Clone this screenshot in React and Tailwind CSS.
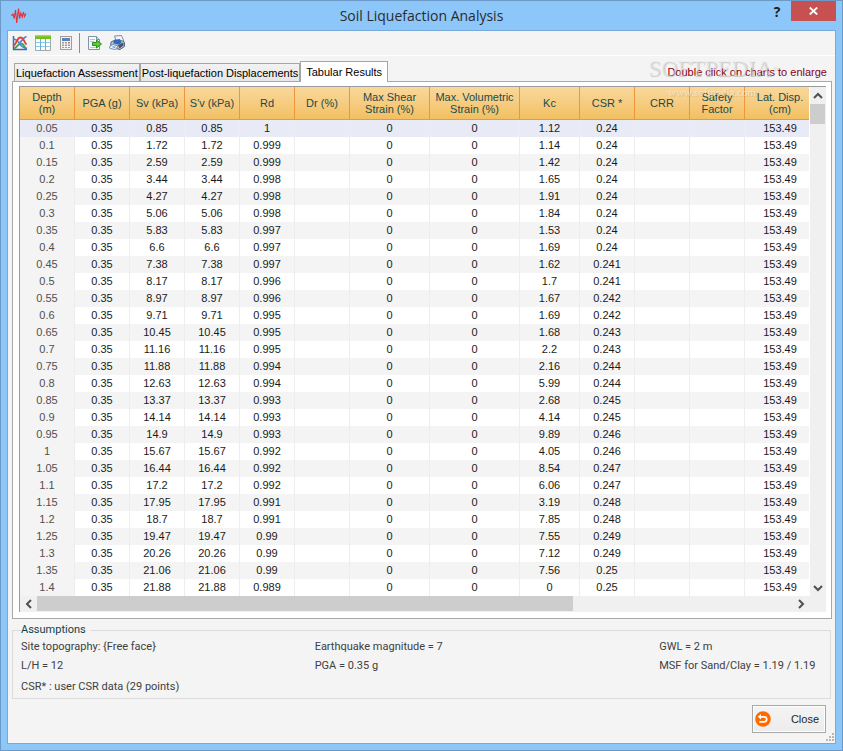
import React, { useState } from 'react';
import clsx from 'clsx';

const COLUMNS = [
  { label: 'Depth (m)', lines: ['Depth', '(m)'], width: 'w-[55px]' },
  { label: 'PGA (g)', width: 'w-[55px]' },
  { label: 'Sv (kPa)', width: 'w-[55px]' },
  { label: "S'v (kPa)", width: 'w-[55px]' },
  { label: 'Rd', width: 'w-[55px]' },
  { label: 'Dr (%)', width: 'w-[55px]' },
  { label: 'Max Shear Strain (%)', width: 'w-[80px]' },
  { label: 'Max. Volumetric Strain (%)', width: 'w-[90px]' },
  { label: 'Kc', width: 'w-[60px]' },
  { label: 'CSR *', width: 'w-[55px]' },
  { label: 'CRR', width: 'w-[55px]' },
  { label: 'Safety Factor', width: 'w-[55px]' },
  { label: 'Lat. Disp. (cm)', width: 'w-[64px]' }
];

// depth, vertical stress, Rd, Kc, CSR
const LAYERS = [
  ['0.05', '0.85', '1', '1.12', '0.24'],
  ['0.1', '1.72', '0.999', '1.14', '0.24'],
  ['0.15', '2.59', '0.999', '1.42', '0.24'],
  ['0.2', '3.44', '0.998', '1.65', '0.24'],
  ['0.25', '4.27', '0.998', '1.91', '0.24'],
  ['0.3', '5.06', '0.998', '1.84', '0.24'],
  ['0.35', '5.83', '0.997', '1.53', '0.24'],
  ['0.4', '6.6', '0.997', '1.69', '0.24'],
  ['0.45', '7.38', '0.997', '1.62', '0.241'],
  ['0.5', '8.17', '0.996', '1.7', '0.241'],
  ['0.55', '8.97', '0.996', '1.67', '0.242'],
  ['0.6', '9.71', '0.995', '1.69', '0.242'],
  ['0.65', '10.45', '0.995', '1.68', '0.243'],
  ['0.7', '11.16', '0.995', '2.2', '0.243'],
  ['0.75', '11.88', '0.994', '2.16', '0.244'],
  ['0.8', '12.63', '0.994', '5.99', '0.244'],
  ['0.85', '13.37', '0.993', '2.68', '0.245'],
  ['0.9', '14.14', '0.993', '4.14', '0.245'],
  ['0.95', '14.9', '0.993', '9.89', '0.246'],
  ['1', '15.67', '0.992', '4.05', '0.246'],
  ['1.05', '16.44', '0.992', '8.54', '0.247'],
  ['1.1', '17.2', '0.992', '6.06', '0.247'],
  ['1.15', '17.95', '0.991', '3.19', '0.248'],
  ['1.2', '18.7', '0.991', '7.85', '0.248'],
  ['1.25', '19.47', '0.99', '7.55', '0.249'],
  ['1.3', '20.26', '0.99', '7.12', '0.249'],
  ['1.35', '21.06', '0.99', '7.56', '0.25'],
  ['1.4', '21.88', '0.989', '0', '0.25']
];

const TABS = ['Liquefaction Assessment', 'Post-liquefaction Displacements', 'Tabular Results'];

const PulseIcon = () => (
  <svg width="16" height="16" viewBox="0 0 16 16" fill="none" stroke="#e5303a" strokeWidth="1.100">
    <path d="M0 7.500l1-.5L2 6l1.200 4.500L4.500 2l1.200 13L7.500.5l1 10L9.800 5l1.400 4L12.500 4l1 4.500 1.500-3" />
  </svg>
);

const ChartIcon = () => (
  <svg width="16" height="16" viewBox="0 0 16 16" fill="none">
    <path d="M1.500 1v13.500H15" stroke="#3a6ea8" strokeWidth="1.500" />
    <path d="M2 13.500C5 13 6 8.500 9 8.500s3 3.500 5 5" stroke="#3fa648" strokeWidth="1.800" />
    <path d="M1 4c3 0 4 1 6 4s4 5 8 5.500" stroke="#4186d8" strokeWidth="1.500" />
    <path d="M7.500 7.500C10 6.500 11 2.500 14.500 1.500" stroke="#4186d8" strokeWidth="1.700" />
    <path d="M2 10.500C5 8 5 2.500 8.500 2.500S12 7.500 14.500 9.500" stroke="#e8403c" strokeWidth="1.900" />
  </svg>
);

const SheetIcon = () => (
  <svg width="16" height="16" viewBox="0 0 16 16" fill="none">
    <path d="M.5 3.500h15v12H.5z" fill="#fff" stroke="#a4a9ac" />
    <path d="M0 .5h16v3.500H0z" fill="#72bf1f" />
    <path d="M0 .5h16v1H0z" fill="#93d44d" />
    <path d="M1 7.500h14M1 11.500h14" stroke="#8ccbe8" />
    <path d="M5.500 4v11.500M10.500 4v11.500" stroke="#62b1dc" />
  </svg>
);

const CalculatorIcon = () => (
  <svg width="16" height="16" viewBox="0 0 16 16">
    <rect x="2.500" y="1.500" width="11" height="13" fill="#f3f2ef" stroke="#a09d98" />
    <rect x="4" y="3" width="8" height="3" fill="#5a82bd" />
    <path d="M4 7h2v1.500H4zM7 7h2v1.500H7zM4 9.500h2V11H4zM7 9.500h2V11H7zM4 12h2v1H4zM7 12h2v1H7zM10 9.500h2V11h-2zM10 12h2v1h-2z" fill="#9a9ca3" />
    <path d="M10 7h2v1.500h-2z" fill="#dd6e55" />
  </svg>
);

const ExportIcon = () => (
  <svg width="16" height="16" viewBox="0 0 16 16">
    <path d="M2.500 1.500h8l3 3v10h-11z" fill="#f7faff" stroke="#7d90ad" />
    <path d="M10.500 1.500v3h3" fill="#c6d5ea" stroke="#7d90ad" />
    <path d="M4 4.500h5M4 6.500h4M4 12.500h7" stroke="#b6c5da" />
    <path d="M6.500 7.500h4V5l5 4-5 4v-2.500h-4z" fill="#5ccc33" stroke="#2b8f18" />
  </svg>
);

const PrinterIcon = () => (
  <svg width="16" height="16" viewBox="0 0 16 16">
    <path d="M5.500 1l7-.5 2.500 6-7 2z" fill="#f2f6fc" stroke="#7f8da5" />
    <path d="M2 7l4-2 8 1 1.500 1.500v4L11 14.500l-9.500-2z" fill="#b8c2d1" stroke="#5b6780" />
    <path d="M4.500 6.500l1-1.500 5.500-1 1.500 4-3 1.500-5-1z" fill="#2c69bb" />
    <path d="M9 10l5.500-2.500v3l-4 3z" fill="#49546a" />
    <path d="M.5 11.500l3.500-2 5 1.500-2.500 3.500-5.500-1z" fill="#fff" stroke="#6f8db8" />
    <path d="M2.500 12l2-1 2.500.7-1.200 1.500z" fill="#7aa3dc" />
  </svg>
);

const BackIcon = () => (
  <svg width="16" height="16" viewBox="0 0 16 16">
    <circle cx="8" cy="8" r="7.800" fill="#ff6a00" />
    <path d="M5 5.800h4.200a2.500 2.500 0 0 1 0 5H4.300" stroke="#fff" strokeWidth="1.700" fill="none" />
    <path d="M2.800 5.800L6 3v5.600z" fill="#fff" />
  </svg>
);

const Chevron = ({ d }) => (
  <svg width="10" height="10" viewBox="0 0 10 10" fill="none" stroke="#505050" strokeWidth="2">
    <path d={d} />
  </svg>
);

const ToolButton = ({ label, children }) => (
  <button type="button" aria-label={label} className="flex h-5 w-[23px] items-center justify-center hover:bg-[#dcebfa]">
    {children}
  </button>
);

const TitleBar = () => (
  <header className="grid h-[29px] grid-cols-[1fr_auto_1fr] px-[6px]">
    <div className="flex items-center pl-1">
      <PulseIcon />
    </div>
    <h1 className="self-center font-['Open_Sans',sans-serif] text-[14px] leading-[20px] text-[#2b2b2b]">
      Soil Liquefaction Analysis
    </h1>
    <div className="flex items-start justify-end">
      <button type="button" aria-label="Help" className="h-[22px] w-7 font-['Open_Sans',sans-serif] text-[14px] leading-[20px] font-bold text-[#1e1e1e]">
        ?
      </button>
      <button type="button" aria-label="Close window" className="flex h-5 w-[45px] items-center justify-center bg-[#c75050]">
        <svg width="9" height="8" viewBox="0 0 9 8" stroke="#fff" strokeWidth="1.800">
          <path d="M.8.5l7.400 7M8.200.5l-7.400 7" />
        </svg>
      </button>
    </div>
  </header>
);

const ResultsTable = () => (
  <table className="w-full table-fixed border-separate border-spacing-0 text-center">
    <colgroup>
      {COLUMNS.map(col => <col key={col.label} className={col.width} />)}
    </colgroup>
    <thead>
      <tr className="h-[33px] bg-linear-to-b from-[#f9d89c] to-[#f2bf5f] text-[#1c4a4a]">
        {COLUMNS.map((col, index) => (
          <th
            key={col.label}
            className={clsx(
              'border-b border-[#f0963a] p-0 leading-[12px] font-normal',
              index < COLUMNS.length - 1 ? 'border-r' : 'pl-[6px]'
            )}
          >
            {col.lines
              ? col.lines.map(line => <span key={line} className="block">{line}</span>)
              : col.label}
          </th>
        ))}
      </tr>
    </thead>
    <tbody className="text-[#1a1a1a]">
      {LAYERS.map(([depth, stress, rd, kc, csr], rowIndex) => {
        const cells = [depth, '0.35', stress, stress, rd, '', '0', '0', kc, csr, '', '', '153.49'];
        return (
          <tr
            key={depth}
            className={clsx(
              'h-[17px]',
              rowIndex === 0 ? 'bg-[#e8eaf5]' : rowIndex % 2 ? 'bg-white' : 'bg-[#f4f4f4]'
            )}
          >
            {cells.map((value, index) => (
              <td
                key={index}
                className={clsx(
                  'p-0 leading-[17px]',
                  index < cells.length - 1 ? 'border-r border-[#ededed]' : 'pl-[6px]',
                  index === 0 && 'text-[#505050]',
                  index === 0 && rowIndex > 0 && 'bg-[#f4f4f4]'
                )}
              >
                {value}
              </td>
            ))}
          </tr>
        );
      })}
    </tbody>
  </table>
);

const Assumptions = () => (
  <fieldset className="mt-1 mr-px border border-[#dcdcdc] pb-[2px] pl-2 font-['Roboto',sans-serif] text-[#404040]">
    <legend className="pr-1 leading-[14px] text-[#12404a]">Assumptions</legend>
    <div className="grid grid-cols-[294fr_345fr_171fr] leading-[19px]">
      <span>Site topography: {'{Free face}'}</span>
      <span>Earthquake magnitude = 7</span>
      <span>GWL = 2 m</span>
      <span>L/H = 12</span>
      <span>PGA = 0.35 g</span>
      <span>MSF for Sand/Clay = 1.19 / 1.19</span>
    </div>
    <p className="mt-[2px] leading-[19px]">CSR* : user CSR data (29 points)</p>
  </fieldset>
);

const SizeGrip = () => (
  <svg width="9" height="9" viewBox="0 0 9 9" fill="#b8b8b8" className="ml-auto">
    <path d="M6 0h2v2H6zM3 3h2v2H3zM6 3h2v2H6zM0 6h2v2H0zM3 6h2v2H3zM6 6h2v2H6z" />
  </svg>
);

const App = () => {
  const [activeTab, setActiveTab] = useState('Tabular Results');

  return (
    <div className="relative flex min-h-screen flex-col border border-[#6b9ac8] bg-[#8dc7fa] font-['Liberation_Sans',Arial,sans-serif] text-[11px]">
      <TitleBar />

      <main className="mx-[6px] mb-[6px] flex-1 border border-[#78aad9] bg-[#f4f4f4]">
        {/* Toolbar */}
        <div className="flex h-[25px] items-center border-b border-white">
          <ToolButton label="Charts"><ChartIcon /></ToolButton>
          <ToolButton label="Table"><SheetIcon /></ToolButton>
          <ToolButton label="Calculator"><CalculatorIcon /></ToolButton>
          <div className="mx-[2px] h-5 w-px bg-[#8c8c8c]" />
          <ToolButton label="Export"><ExportIcon /></ToolButton>
          <ToolButton label="Print"><PrinterIcon /></ToolButton>
        </div>

        <div className="pr-[3px] pl-1">
          {/* Tabs */}
          <div className="flex h-[25px] items-end justify-between">
            <div role="tablist" className="flex items-end pl-[2px]">
              {TABS.map(tab => (
                <button
                  key={tab}
                  type="button"
                  role="tab"
                  aria-selected={tab === activeTab}
                  onClick={() => setActiveTab(tab)}
                  className={clsx(
                    'border border-b-0 border-[#a5a5a5] text-black',
                    tab === activeTab
                      ? 'relative -mb-px h-[21px] bg-white px-[5px]'
                      : 'h-[18px] bg-linear-to-b from-[#f2f2f2] to-[#e6e6e6] px-px pt-px'
                  )}
                >
                  {tab}
                </button>
              ))}
            </div>
            <p className="pr-[5px] leading-[18px] text-[#8b0015]">Double click on charts to enlarge</p>
          </div>

          {/* Results grid */}
          <section className="border border-[#a8a8a8] bg-white pt-1 pr-[5px] pb-[6px] pl-[6px]">
            <div className="border-t border-l border-[#9a9a9a]">
              <div className="flex">
                <div className="min-w-0 flex-1">
                  <ResultsTable />
                </div>
                <div className="ml-px flex w-4 flex-col bg-[#f0f0f0]">
                  <button type="button" aria-label="Scroll up" className="flex h-[17px] items-center justify-center">
                    <Chevron d="M1 7l4-4 4 4" />
                  </button>
                  <div className="flex-1">
                    <div className="mr-px h-5 bg-[#cdcdcd]" />
                  </div>
                  <button type="button" aria-label="Scroll down" className="flex h-[17px] items-center justify-center">
                    <Chevron d="M1 3l4 4 4-4" />
                  </button>
                </div>
              </div>
              <div className="flex h-4 bg-[#f0f0f0] pr-[17px]">
                <button type="button" aria-label="Scroll left" className="flex w-[17px] items-center justify-center">
                  <Chevron d="M7 1L3 5l4 4" />
                </button>
                <div className="flex-1 pb-px">
                  <div className="h-full w-[71%] bg-[#cdcdcd]" />
                </div>
                <button type="button" aria-label="Scroll right" className="flex w-[17px] items-center justify-center">
                  <Chevron d="M3 1l4 4-4 4" />
                </button>
              </div>
            </div>
          </section>

          <Assumptions />

          <div className="mt-[6px] flex justify-end pr-[6px]">
            <button
              type="button"
              className="flex h-7 w-[74px] items-center justify-between border border-[#a8a8a8] bg-linear-to-b from-[#f4f4f4] to-[#ececec] pr-[6px] pl-[2px] text-[#1f1f1f] ring-1 ring-white ring-inset"
            >
              <BackIcon />
              Close
            </button>
          </div>
        </div>
        <SizeGrip />
      </main>

      {/* Watermark */}
      <div className="pointer-events-none absolute top-[55px] right-[62px] font-['Liberation_Serif',serif]">
        <p className="text-[23px] leading-[26px] text-[#ececec]/50 [text-shadow:1px_1px_1px_#00000030]">
          SOFTPEDIA<sup className="text-[8px]">™</sup>
        </p>
        <p className="pl-5 text-[11px] leading-[20px] text-white/50 [text-shadow:1px_1px_1px_#00000020]">www.softpedia.com</p>
      </div>
    </div>
  );
};

export default App;
